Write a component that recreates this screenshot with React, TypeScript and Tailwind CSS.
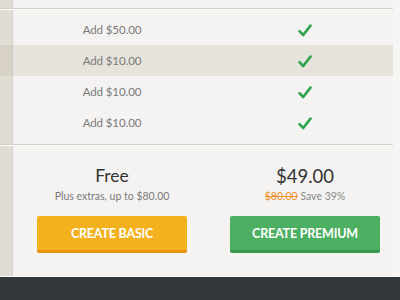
import React from 'react';

const rows = [
  { label: 'Add $50.00', hi: false },
  { label: 'Add $10.00', hi: true },
  { label: 'Add $10.00', hi: false },
  { label: 'Add $10.00', hi: false },
];

function Check() {
  return (
    <svg width="14" height="13" viewBox="0 0 14 13">
      <path d="M1.5 7.2 L5.2 11 L12.5 1.6" fill="none" stroke="#2ea44f" strokeWidth="2.6" strokeLinecap="round" strokeLinejoin="round" />
    </svg>
  );
}

// fila de ancho completo: franja izquierda + panel + margen derecho
function Band({ h, strip, main, children }: { h: string; strip: string; main: string; children?: React.ReactNode }) {
  return (
    <div className={`flex ${h}`}>
      <div className={`w-[13px] ${strip}`} />
      <div className={`w-[380px] ${main}`}>{children}</div>
      <div className="flex-1 bg-[#f7f6f4]" />
    </div>
  );
}

function Line() {
  return (
    <div className="flex h-[2px]">
      <div className="w-[393px] border-t border-[#d3cfc7] border-b border-b-[#fbfbfa]" />
      <div className="flex-1 bg-[#f7f6f4]" />
    </div>
  );
}

const stripBase = 'bg-[#e1ddd5] border-r border-[#d6d1c8]';

export default function App() {
  return (
    <div className="w-[400px] h-[300px] flex flex-col bg-[#f5f4f2] overflow-hidden" style={{ fontFamily: 'Lato, "Open Sans", sans-serif' }}>
      <Band h="h-[8px]" strip={stripBase} main="bg-[#f4f3f1]" />
      <Line />
      <Band h="h-[4px]" strip={stripBase} main="bg-[#f4f3f1]" />
      {rows.map((r, i) => (
        <Band
          key={i}
          h="h-[31px]"
          strip={r.hi ? 'bg-[#d8d1c6] border-r border-[#cfc8bc]' : stripBase}
          main={`flex items-center pl-[24px] ${r.hi ? 'bg-[#e6e2dc]' : 'bg-[#f4f3f1]'}`}
        >
          <div className="w-[150px] text-center text-[11.5px] tracking-[-0.1px] text-[#7a7a7a] pt-[1px]">{r.label}</div>
          <div className="w-[43px]" />
          <div className="w-[150px] flex justify-center pt-[1px]">
            <Check />
          </div>
        </Band>
      ))}
      <Band h="h-[6px]" strip={stripBase} main="bg-[#f4f3f1]" />
      <Line />

      {/* Planes */}
      <Band h="flex-1" strip={stripBase} main="flex pl-[24px] pt-[20px] bg-[#f4f3f1]">
        <div className="w-[150px] flex flex-col items-center">
          <div className="text-[17.5px] leading-[20px] text-[#333]">Free</div>
          <div className="text-[10.5px] leading-[16px] text-[#7a7a7a] mt-[2px]">Plus extras, up to $80.00</div>
          <button className="mt-[12px] w-[150px] h-[37px] bg-[#f3b11d] border-b-[3px] border-[#e8920e] rounded-[2px] text-white font-bold text-[12.5px] tracking-[-0.2px] pt-[2px]">
            CREATE BASIC
          </button>
        </div>
        <div className="w-[43px]" />
        <div className="w-[150px] flex flex-col items-center">
          <div className="text-[18.5px] leading-[20px] text-[#333]">$49.00</div>
          <div className="text-[10.5px] leading-[16px] text-[#888] mt-[2px]">
            <span className="line-through text-[#f0922b]">$80.00</span> Save 39%
          </div>
          <button className="mt-[12px] w-[150px] h-[37px] bg-[#4caf62] border-b-[3px] border-[#3a964f] rounded-[2px] text-white font-bold text-[12.5px] tracking-[-0.2px] pt-[2px]">
            CREATE PREMIUM
          </button>
        </div>
      </Band>
      <div className="h-[1px] bg-[#fbfbfa]" />
      <div className="h-[23px] bg-[#34373c]" />
    </div>
  );
}
